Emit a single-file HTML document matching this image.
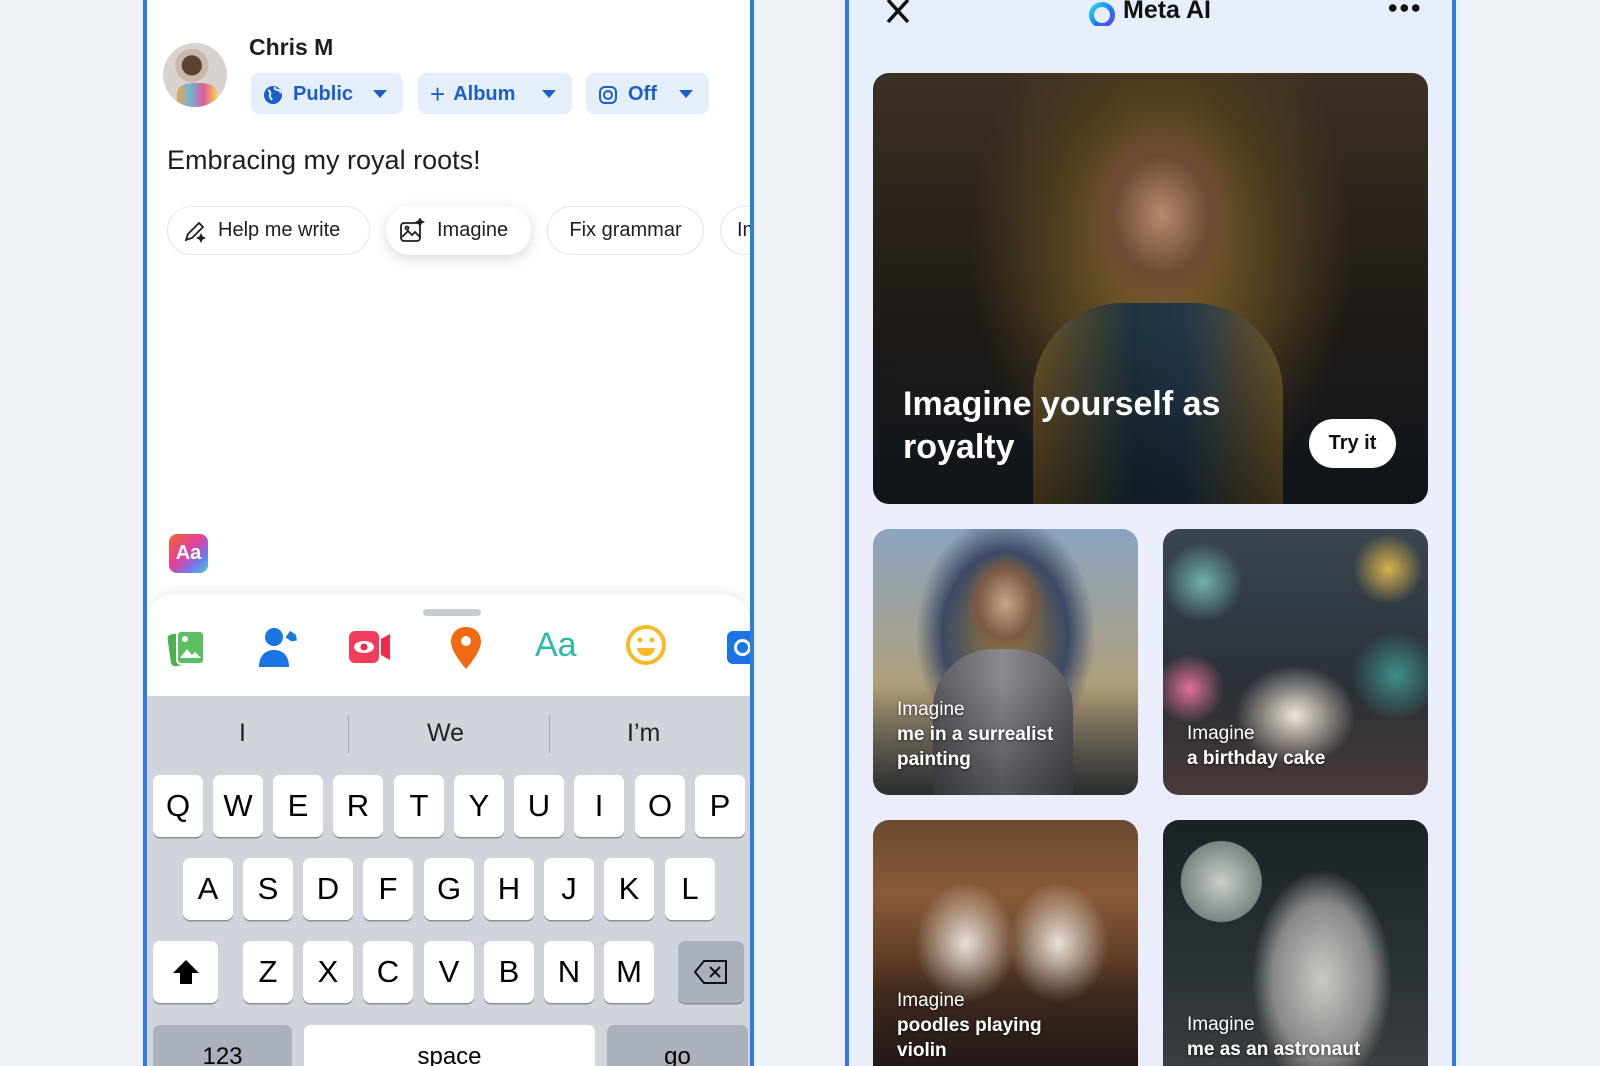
<!DOCTYPE html>
<html style="width:1600px;height:1066px;overflow:hidden"><head><meta charset="utf-8"><style>
*{box-sizing:border-box;margin:0;padding:0}
body{width:1600px;height:1066px;overflow:hidden;background:#eef1f6;font-family:"Liberation Sans",sans-serif;position:relative}
.abs{position:absolute}
#L{left:143px;top:-4px;width:611px;height:1070px;border:4px solid #2d7be5;border-bottom:none;background:#fff;overflow:hidden}
#R{left:845px;top:-4px;width:611px;height:1070px;border:4px solid #2d7be5;border-bottom:none;background:linear-gradient(180deg,#e6effb,#eceffb 50%,#e8eefa);overflow:hidden}
.chip{position:absolute;top:73px;height:41px;background:#e5effc;border-radius:8px;color:#1c5fc7;font-weight:bold;font-size:20px;display:flex;align-items:center;padding-left:12px;padding-top:2px}
.tri{display:inline-block;width:0;height:0;border-left:7px solid transparent;border-right:7px solid transparent;border-top:8px solid #1c5fc7;position:absolute;right:16px;top:17px}
.pill{position:absolute;top:206px;height:49px;border:1.5px solid #e2e4e8;border-radius:25px;font-size:20px;color:#1c1e21;display:flex;align-items:center;background:#fff}
.key{position:absolute;width:50px;height:62px;background:#fff;border-radius:7px;box-shadow:0 1.5px 0 #8b8e94;font-size:31px;color:#000;display:flex;align-items:center;justify-content:center}
.gk{background:#abb1bb}
.card{position:absolute;border-radius:16px;overflow:hidden}
.lab{position:absolute;left:24px;color:#fff;font-size:19px;line-height:25px;text-shadow:0 1px 3px rgba(0,0,0,.6)}
.lab b{font-weight:bold}
</style></head><body>
<div id="L" class="abs">
  <div class="abs" style="left:16px;top:43px;width:64px;height:64px;border-radius:50%;background:radial-gradient(circle at 45% 35%,#5a4334 0 18%,#c9b8a8 19% 30%,#d8d3cf 31%);overflow:hidden">
    <div class="abs" style="left:14px;top:40px;width:40px;height:24px;border-radius:40% 40% 0 0;background:linear-gradient(90deg,#e9a44a,#6ab7d8,#e45a9b,#f3d24a)"></div>
  </div>
  <div class="abs" style="left:102px;top:34px;font-size:23px;font-weight:bold;color:#1c1e21">Chris M</div>
  <div class="chip" style="left:104px;width:152px"><svg width="20" height="20" viewBox="0 0 20 20"><circle cx="10" cy="10" r="9" fill="#1c5fc7"/><path d="M5 5c2 1 3 3 2 5s1 3 2 5M12 2c-1 2 1 3 3 3s2 2 3 3" stroke="#e5effc" stroke-width="2" fill="none"/></svg><span style="margin-left:10px">Public</span><span class="tri"></span></div>
  <div class="chip" style="left:271px;width:154px"><span style="font-size:26px;font-weight:normal;margin-right:8px">+</span>Album<span class="tri"></span></div>
  <div class="chip" style="left:439px;width:123px"><svg width="20" height="20" viewBox="0 0 20 20" fill="none" stroke="#1c5fc7" stroke-width="2"><rect x="2" y="2" width="16" height="16" rx="5"/><circle cx="10" cy="10" r="4"/></svg><span style="margin-left:10px">Off</span><span class="tri"></span></div>
  <div class="abs" style="left:20px;top:145px;font-size:27px;color:#1c1e21">Embracing my royal roots!</div>
  <div class="pill" style="left:20px;width:203px;padding-left:14px"><svg width="26" height="26" viewBox="0 0 26 26" fill="none" stroke="#1c1e21" stroke-width="1.8"><path d="M4 22l2-6L17 5l4 4L10 20z"/><path d="M19 17l1 2 2 1-2 1-1 2-1-2-2-1 2-1z" fill="#1c1e21"/></svg><span style="margin-left:10px">Help me write</span></div>
  <div class="pill" style="left:239px;width:145px;padding-left:12px;border-color:#fff;box-shadow:0 4px 14px rgba(0,0,0,.15)"><svg width="26" height="26" viewBox="0 0 26 26" fill="none" stroke="#1c1e21" stroke-width="1.8"><rect x="2" y="5" width="19" height="18" rx="3"/><path d="M3 19l6-6 4 4 3-3 5 5"/><circle cx="8" cy="10" r="1.5"/><path d="M21 1l1 2 2 1-2 1-1 2-1-2-2-1 2-1z" fill="#1c1e21"/></svg><span style="margin-left:12px">Imagine</span></div>
  <div class="pill" style="left:400px;width:157px;justify-content:center">Fix grammar</div>
  <div class="pill" style="left:573px;width:34px;padding-left:16px;border-right:none;border-radius:25px 0 0 25px">Im</div>
  <div class="abs" style="left:22px;top:534px;width:39px;height:39px;border-radius:8px;background:linear-gradient(135deg,#f0662e,#e53f9a 45%,#6b7df0 75%,#4fd0c0);color:#fff;font-weight:bold;font-size:20px;display:flex;align-items:center;justify-content:center">Aa</div>
  <div class="abs" style="left:0;top:594px;width:603px;height:472px;background:#fff;border-radius:28px 28px 0 0;box-shadow:0 -3px 10px rgba(0,0,0,.08)"></div>
  <div class="abs" style="left:276px;top:609px;width:58px;height:7px;border-radius:4px;background:#c9ccd1"></div>
  <svg class="abs" style="left:20px;top:628px" width="40" height="40" viewBox="0 0 40 40"><rect x="2" y="5" width="26" height="32" rx="4" fill="#4caf50" transform="rotate(-8 15 20)"/><rect x="10" y="3" width="27" height="33" rx="4" fill="#5bbf63" stroke="#fff" stroke-width="2"/><path d="M13 30l7-9 5 6 3-3 6 6z" fill="#fff"/><circle cx="18" cy="11" r="3" fill="#fff"/></svg>
  <svg class="abs" style="left:110px;top:625px" width="46" height="46" viewBox="0 0 46 46"><circle cx="17" cy="12" r="9" fill="#1b74e4"/><path d="M2 42c0-12 7-17 15-17s15 5 15 17z" fill="#1b74e4"/><path d="M30 8l7 0 4 4-4 4-7 0z" fill="#1b74e4" transform="rotate(35 35 12)"/></svg>
  <svg class="abs" style="left:201px;top:629px" width="44" height="36" viewBox="0 0 44 36"><rect x="1" y="2" width="30" height="32" rx="6" fill="#f02849" opacity=".9"/><path d="M33 10l9-5v26l-9-5z" fill="#f02849"/><ellipse cx="16" cy="18" rx="10" ry="6" fill="#fff"/><circle cx="16" cy="18" r="3.5" fill="#f02849"/></svg>
  <svg class="abs" style="left:302px;top:625px" width="34" height="46" viewBox="0 0 34 46"><path d="M17 2C8 2 2 8 2 17c0 10 15 27 15 27s15-17 15-27C32 8 26 2 17 2z" fill="#f06a12"/><circle cx="17" cy="16" r="5" fill="#fff"/></svg>
  <div class="abs" style="left:388px;top:626px;font-size:34px;color:#2abba7">Aa</div>
  <svg class="abs" style="left:478px;top:624px" width="42" height="42" viewBox="0 0 42 42"><circle cx="21" cy="21" r="18" fill="none" stroke="#f7b928" stroke-width="4"/><circle cx="15" cy="16" r="2.5" fill="#f7b928"/><circle cx="27" cy="16" r="2.5" fill="#f7b928"/><path d="M12 24h18c-1 6-5 8-9 8s-8-2-9-8z" fill="#f7b928"/></svg>
  <div class="abs" style="left:580px;top:631px;width:23px;height:33px;border-radius:6px 0 0 6px;background:#1b74e4;overflow:hidden"><div class="abs" style="left:7px;top:8px;width:17px;height:17px;border:3px solid #fff;border-radius:50%"></div></div>
  <div class="abs" style="left:0;top:696px;width:603px;height:370px;background:#d1d4da"></div>
  <div class="abs" style="left:92px;top:719px;font-size:25px;color:#222">I</div>
  <div class="abs" style="left:280px;top:719px;font-size:25px;color:#222">We</div>
  <div class="abs" style="left:480px;top:719px;font-size:25px;color:#222">I’m</div>
  <div class="abs" style="left:201px;top:715px;width:1px;height:38px;background:#a9adb4"></div>
  <div class="abs" style="left:402px;top:715px;width:1px;height:38px;background:#a9adb4"></div>
  <div class="key" style="left:6px;top:775px">Q</div><div class="key" style="left:66px;top:775px">W</div><div class="key" style="left:126px;top:775px">E</div><div class="key" style="left:186px;top:775px">R</div><div class="key" style="left:247px;top:775px">T</div><div class="key" style="left:307px;top:775px">Y</div><div class="key" style="left:367px;top:775px">U</div><div class="key" style="left:427px;top:775px">I</div><div class="key" style="left:488px;top:775px">O</div><div class="key" style="left:548px;top:775px">P</div>
  <div class="key" style="left:36px;top:858px">A</div><div class="key" style="left:96px;top:858px">S</div><div class="key" style="left:156px;top:858px">D</div><div class="key" style="left:216px;top:858px">F</div><div class="key" style="left:277px;top:858px">G</div><div class="key" style="left:337px;top:858px">H</div><div class="key" style="left:397px;top:858px">J</div><div class="key" style="left:457px;top:858px">K</div><div class="key" style="left:518px;top:858px">L</div>
  <div class="key" style="left:6px;top:941px;width:65px"><svg width="28" height="26" viewBox="0 0 28 26"><path d="M14 1L1 14h7v11h12V14h7z" fill="#000"/></svg></div>
  <div class="key" style="left:96px;top:941px">Z</div><div class="key" style="left:156px;top:941px">X</div><div class="key" style="left:216px;top:941px">C</div><div class="key" style="left:277px;top:941px">V</div><div class="key" style="left:337px;top:941px">B</div><div class="key" style="left:397px;top:941px">N</div><div class="key" style="left:457px;top:941px">M</div>
  <div class="key gk" style="left:531px;top:941px;width:66px"><svg width="36" height="26" viewBox="0 0 36 26" fill="none" stroke="#111" stroke-width="2"><path d="M11 2h22v22H11L2 13z"/><path d="M17 8l10 10M27 8L17 18"/></svg></div>
  <div class="key gk" style="left:6px;top:1025px;width:139px;height:41px;border-radius:7px 7px 0 0;box-shadow:none;font-size:24px;align-items:flex-start;padding-top:18px">123</div>
  <div class="key" style="left:157px;top:1025px;width:291px;height:41px;border-radius:7px 7px 0 0;box-shadow:none;font-size:24px;align-items:flex-start;padding-top:18px">space</div>
  <div class="key gk" style="left:460px;top:1025px;width:141px;height:41px;border-radius:7px 7px 0 0;box-shadow:none;font-size:24px;align-items:flex-start;padding-top:18px">go</div>
</div>

<div id="R" class="abs">
  <svg class="abs" style="left:36px;top:0px" width="26" height="24" viewBox="0 0 26 24"><path d="M3 0L23 22M23 0L3 22" stroke="#111" stroke-width="3.5"/></svg>
  <svg class="abs" style="left:238px;top:0px" width="30" height="26" viewBox="0 -4 30 26"><circle cx="15" cy="11" r="10.5" fill="none" stroke="url(#g)" stroke-width="5"/><defs><linearGradient id="g" x1="0" y1="0" x2="1" y2="1"><stop offset="0" stop-color="#2bd3f0"/><stop offset=".6" stop-color="#1877f2"/><stop offset="1" stop-color="#6b3ff0"/></linearGradient></defs></svg>
  <div class="abs" style="left:274px;top:0px;font-size:25px;line-height:20px;font-weight:bold;color:#111">Meta AI</div>
  <div class="abs" style="left:538px;top:4px;width:34px;height:8px;background:radial-gradient(circle,#111 3.5px,transparent 4px) 0 0/11.5px 8px repeat-x"></div>

  <div class="card" style="left:24px;top:73px;width:555px;height:431px;background:radial-gradient(ellipse 80px 100px at 52% 33%,#b58a6c,#6d4a35 60%,transparent 100%),radial-gradient(ellipse 190px 280px at 52% 40%,#8a6a2c,#4b3a1e 60%,transparent 100%),linear-gradient(180deg,#3b3024,#1e1a16 60%,#1c2530)">
    <div class="abs" style="left:160px;top:230px;width:250px;height:201px;border-radius:90px 90px 0 0;background:linear-gradient(90deg,#6a5328,#1f3340 40%,#22364a 60%,#6c5628)"></div>
    <div class="abs" style="left:0;top:250px;width:555px;height:181px;background:linear-gradient(180deg,transparent,rgba(0,0,0,.45))"></div>
    <div class="abs" style="left:30px;top:310px;font-size:34px;font-weight:bold;color:#fff;line-height:43px">Imagine yourself as<br>royalty</div>
    <div class="abs" style="left:436px;top:346px;width:87px;height:49px;border-radius:25px;background:#fff;font-size:20px;font-weight:bold;color:#111;display:flex;align-items:center;justify-content:center">Try it</div>
  </div>

  <div class="card" style="left:24px;top:529px;width:265px;height:266px;background:radial-gradient(ellipse 40px 50px at 50% 28%,#c9a38a,#7a5a45 70%,transparent),radial-gradient(ellipse 90px 120px at 50% 40%,#9a7a3a,#3d4a66 70%,transparent),linear-gradient(180deg,#8aa4c0,#b0a07a 60%,#4a4b50)">
    <div class="abs" style="left:60px;top:120px;width:140px;height:146px;border-radius:60px 60px 0 0;background:linear-gradient(90deg,#5a5a60,#8a8a90,#5a5a60)"></div>
    <div class="abs" style="left:0;top:150px;width:265px;height:116px;background:linear-gradient(180deg,transparent,rgba(0,0,0,.4))"></div>
    <div class="lab" style="top:168px">Imagine<br><b>me in a surrealist<br>painting</b></div>
  </div>
  <div class="card" style="left:314px;top:529px;width:265px;height:266px;background:radial-gradient(circle 40px at 15% 20%,#6fb3a8,transparent),radial-gradient(circle 45px at 88% 55%,#3f8f88,transparent),radial-gradient(circle 35px at 10% 60%,#e06f98,transparent),radial-gradient(circle 35px at 85% 15%,#d9b24a,transparent),radial-gradient(ellipse 60px 50px at 50% 70%,#f0e6d8,transparent),linear-gradient(180deg,#3a4650,#2a3036 60%,#4a3a38)">
    <div class="lab" style="top:192px">Imagine<br><b>a birthday cake</b></div>
  </div>
  <div class="card" style="left:24px;top:820px;width:265px;height:246px;border-radius:16px 16px 0 0;background:radial-gradient(ellipse 50px 60px at 35% 50%,#e8e0d8,transparent),radial-gradient(ellipse 50px 60px at 70% 50%,#e8e0d8,transparent),linear-gradient(180deg,#6a4a30,#8a5a38 30%,#4a3020 70%,#3a2a28)">
    <div class="abs" style="left:0;top:140px;width:265px;height:106px;background:linear-gradient(180deg,transparent,rgba(0,0,0,.4))"></div>
    <div class="lab" style="top:168px">Imagine<br><b>poodles playing<br>violin</b></div>
  </div>
  <div class="card" style="left:314px;top:820px;width:265px;height:246px;border-radius:16px 16px 0 0;background:radial-gradient(circle 50px at 22% 25%,#c8cec8,#7a8680 80%,transparent 82%),radial-gradient(ellipse 70px 110px at 60% 65%,#c9c9c4,#888 70%,transparent),linear-gradient(180deg,#1a2226,#2a3236 60%,#3a3e40)">
    <div class="lab" style="top:192px">Imagine<br><b>me as an astronaut</b></div>
  </div>
</div>
</body></html>
